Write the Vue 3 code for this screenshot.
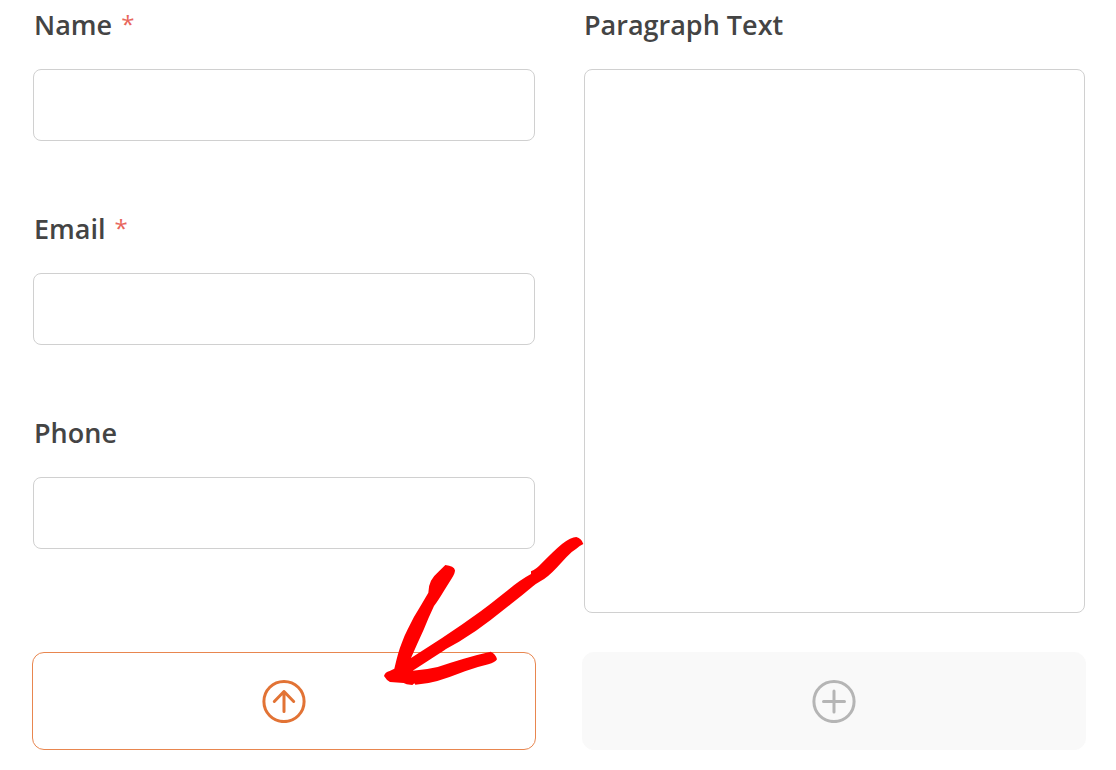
<script setup>
const fields = [
  { id: 'name', label: 'Name', type: 'text', required: true },
  { id: 'email', label: 'Email', type: 'email', required: true },
  { id: 'phone', label: 'Phone', type: 'tel', required: false },
]
</script>

<template>
  <main class="builder">
    <div class="column">
      <div v-for="field in fields" :key="field.id" class="field">
        <label :for="field.id">{{ field.label }}<span v-if="field.required" class="required">*</span></label>
        <input :id="field.id" :type="field.type" :required="field.required" />
      </div>
    </div>
    <div class="column wide">
      <div class="field fill">
        <label for="message">Paragraph Text</label>
        <textarea id="message"></textarea>
      </div>
    </div>
    <button type="button" class="drop active" aria-label="Move field here">
      <svg viewBox="0 0 44 44" class="icon">
        <circle cx="22" cy="22.5" r="20.1" />
        <path d="M22 32.5V12.5M12.3 22.5L22 12.5L31.7 22.5" />
      </svg>
    </button>
    <button type="button" class="drop" aria-label="Add field">
      <svg viewBox="0 0 44 44" class="icon">
        <circle cx="22" cy="22.5" r="20.1" />
        <path d="M22 12V33M11.5 22.5H32.5" />
      </svg>
    </button>
    <svg class="pointer" viewBox="0 0 660 495" aria-hidden="true">
      <path d="M211 105Q237 108 240 121Q240 130 231 144L208 181Q187 216 177 228Q161 262 146 299Q126 342 108 384L200 325L260 284L315 245L345 223L400 179Q435 150 468 132V124Q484 118 500 100Q538 61 561 42Q588 21 604 21Q620 25 625 42Q614 47 604 56Q588 65 574 82L545 113Q520 140 496 154Q482 162 472 170L442 195L407 223L347 270L303 302L252 335L213 357L208 361Q162 391 113 422Q151 420 188 411C240 393 292 377 347 365Q362 371 366 388Q361 397 340 403Q310 410 272 423Q226 441 187 453Q157 462 121 464L118 460L112 465L95 463L86 459L45 456Q34 450 27 438Q30 426 44 423L58 416Q70 364 80 340Q88 317 97 300Q117 258 138 226L160 188Q160 168 168 152Q178 136 192 124Z" />
    </svg>
  </main>
</template>

<style>
body {
  margin: 0;
  background: #fff;
}
</style>

<style scoped>
.builder {
  position: relative;
  display: grid;
  grid-template-columns: 1fr 1fr;
  gap: 39px 46px;
  padding: 5px 30px 20px 32px;
  color: #444;
  font-family: "Segoe UI", "Open Sans", "Noto Sans", sans-serif;
}

.column {
  display: flex;
  flex-direction: column;
  gap: 68px;
  min-height: 608px;
  padding: 0 1px;
}

.wide {
  padding: 0 1px 0 2px;
}

.field {
  display: flex;
  flex-direction: column;
  gap: 24px;
}

.fill {
  flex: 1;
}

label {
  padding-left: 1px;
  font-size: 27px;
  font-weight: 600;
  line-height: 40px;
}

.wide label {
  padding-left: 0;
}

.required {
  margin-left: 9px;
  color: #e8665c;
  font-size: 24px;
  font-weight: 400;
  line-height: 24px;
  vertical-align: 2px;
}

input,
textarea {
  box-sizing: border-box;
  width: 100%;
  height: 72px;
  margin: 0;
  padding: 0 16px;
  border: 1px solid #d0d0d0;
  border-radius: 8px;
  background: #fff;
  color: inherit;
  font: inherit;
  font-size: 27px;
}

textarea {
  flex: 1;
  padding: 16px;
  resize: none;
}

.drop {
  display: flex;
  align-items: center;
  justify-content: center;
  height: 98px;
  margin: 0;
  padding: 0;
  border: 1px solid #f9f9f9;
  border-radius: 12px;
  background: #f9f9f9;
  color: #b5b5b5;
  cursor: pointer;
}

.active {
  border-color: #e8864f;
  background: #fff;
  color: #e27335;
}

.icon {
  width: 44px;
  height: 44px;
  fill: none;
  stroke: currentColor;
  stroke-width: 3;
  stroke-linecap: round;
  stroke-linejoin: round;
}

.pointer {
  position: absolute;
  top: 530px;
  left: 375px;
  width: 220px;
  height: 165px;
  fill: #f00;
  pointer-events: none;
}
</style>
